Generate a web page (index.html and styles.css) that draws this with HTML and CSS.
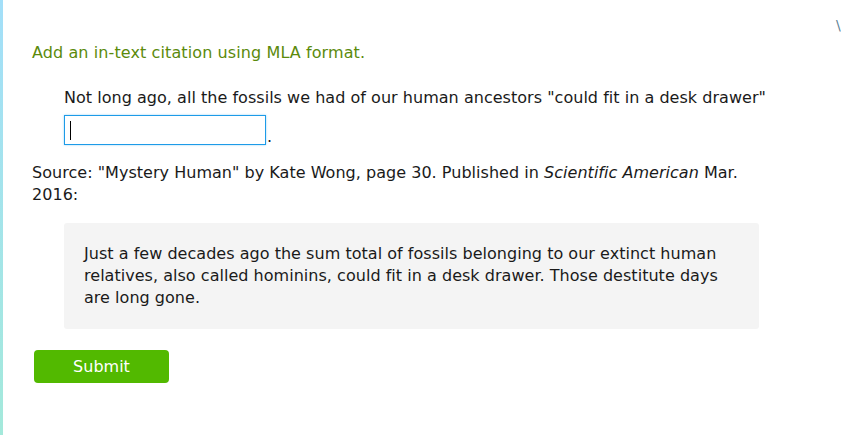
FILE: index.html
```html
<!DOCTYPE html>
<html>
<head>
<meta charset="utf-8">
<link rel="stylesheet" href="styles.css">
</head>
<body>
<div class="frame">
  <span class="corner-mark">\</span>
  <main class="content">
    <h1 class="prompt">Add an in-text citation using MLA format.</h1>
    <p class="sentence">Not long ago, all the fossils we had of our human ancestors "could fit in a desk drawer"</p>
    <div class="answer-row">
      <span class="answer-input"><span class="caret"></span></span><span class="period">.</span>
    </div>
    <p class="source">Source: "Mystery Human" by Kate Wong, page 30. Published in <em>Scientific American</em> Mar. 2016:</p>
    <blockquote class="quote">Just a few decades ago the sum total of fossils belonging to our extinct human relatives, also called hominins, could fit in a desk drawer. Those destitute days are long gone.</blockquote>
    <button class="submit">Submit</button>
  </main>
</div>
</body>
</html>
```

FILE: styles.css
```css
html, body {
  margin: 0;
  padding: 0;
  background: #ffffff;
}

body {
  font-family: "DejaVu Sans", Verdana, sans-serif;
  font-size: 16px;
  letter-spacing: 0.03px;
  line-height: 22px;
  color: #1a1a1a;
  width: 841px;
  height: 435px;
  overflow: hidden;
}

.frame {
  position: relative;
  height: 435px;
  border-left: 3px solid transparent;
  border-image: linear-gradient(to bottom, #a3dff9, #a4e9db) 1;
  box-sizing: border-box;
}

.corner-mark {
  position: absolute;
  left: 833px;
  top: 14px;
  font-size: 14px;
  color: #5d7f95;
}

.content {
  width: 744px;
  padding: 42px 0 0 29px;
  display: flex;
  flex-direction: column;
  align-items: flex-start;
}

.prompt {
  margin: 0;
  font-size: 16px;
  font-weight: normal;
  line-height: 22px;
  letter-spacing: 0.1px;
  color: #5b8a0c;
}

.sentence {
  margin: 23px 0 0 32px;
}

.answer-row {
  margin: 6px 0 0 32px;
  display: flex;
  align-items: flex-end;
}

.answer-input {
  display: block;
  width: 200px;
  height: 28px;
  border: 1px solid #1d9be8;
  box-shadow: 0 0 2px #9dd2f3;
  background: #ffffff;
  position: relative;
}

.caret {
  position: absolute;
  left: 5px;
  top: 5px;
  width: 1px;
  height: 19px;
  background: #000000;
}

.period {
  line-height: 16px;
  margin-left: 1px;
}

.source {
  margin: 17px 0 0 0;
}

.source em {
  font-style: italic;
}

.quote {
  margin: 17px 0 0 32px;
  width: 655px;
  padding: 20px;
  background: #f4f4f4;
  border-radius: 3px;
}

.submit {
  margin: 21px 0 0 2px;
  width: 135px;
  height: 33px;
  border: none;
  border-radius: 4px;
  background: #52b900;
  color: #ffffff;
  font-family: "DejaVu Sans", Verdana, sans-serif;
  font-size: 16px;
  padding: 0;
}
```
